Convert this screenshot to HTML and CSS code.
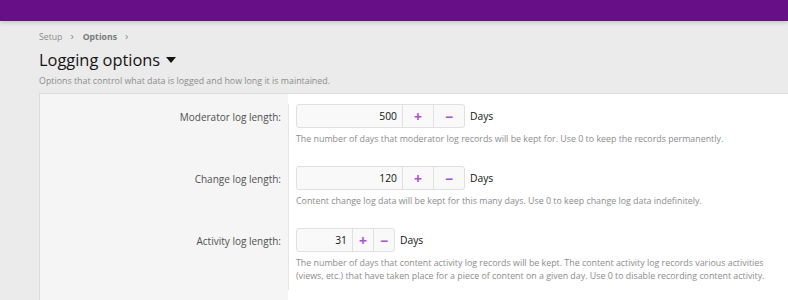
FILE: index.html
```html
<!DOCTYPE html>
<html lang="en">
<head>
    <meta charset="UTF-8">
    <title>Logging options</title>
    <link rel="stylesheet" href="styles.css">
</head>
<body>

    <header class="top-bar"></header>

    <div class="page">
        <ul class="crumbs">
            <li><a href="#">Setup</a></li>
            <li><a href="#" class="current">Options</a></li>
        </ul>

        <h1 class="page-title">Logging options <span class="caret"></span></h1>
        <p class="page-desc">Options that control what data is logged and how long it is maintained.</p>

        <div class="block">
            <div class="form-row">
                <label class="row-label">Moderator log length:</label>
                <div class="row-input">
                    <div class="input-line">
                        <div class="spinner">
                            <input type="text" class="num" value="500">
                            <button class="step">+</button>
                            <button class="step">&minus;</button>
                        </div>
                        <span class="unit">Days</span>
                    </div>
                    <p class="explain">The number of days that moderator log records will be kept for. Use 0 to keep the records permanently.</p>
                </div>
            </div>

            <div class="form-row">
                <label class="row-label">Change log length:</label>
                <div class="row-input">
                    <div class="input-line">
                        <div class="spinner">
                            <input type="text" class="num" value="120">
                            <button class="step">+</button>
                            <button class="step">&minus;</button>
                        </div>
                        <span class="unit">Days</span>
                    </div>
                    <p class="explain">Content change log data will be kept for this many days. Use 0 to keep change log data indefinitely.</p>
                </div>
            </div>

            <div class="form-row">
                <label class="row-label">Activity log length:</label>
                <div class="row-input">
                    <div class="input-line">
                        <div class="spinner small">
                            <input type="text" class="num" value="31">
                            <button class="step">+</button>
                            <button class="step">&minus;</button>
                        </div>
                        <span class="unit">Days</span>
                    </div>
                    <p class="explain">The number of days that content activity log records will be kept. The content activity log records various activities (views, etc.) that have taken place for a piece of content on a given day. Use 0 to disable recording content activity.</p>
                </div>
            </div>
        </div>
    </div>

</body>
</html>
```

FILE: styles.css
```css
body {
    font-family: "Open Sans", Arial, sans-serif;
    background-color: #ebebeb;
    color: #141414;
    margin: 0;
    padding: 0;
}
.top-bar {
    height: 21px;
    background-color: #670f86;
    box-shadow: 0 2px 4px rgba(0, 0, 0, 0.15);
}
.page {
    padding: 0 0 0 39px;
}
.crumbs {
    list-style-type: none;
    margin: 0;
    padding: 8px 0 0 0;
    display: flex;
    font-size: 8.7px;
    line-height: 14px;
}
.crumbs li::after {
    content: "\203A";
    color: #8c8c8c;
    margin: 0 9px 0 8px;
    font-size: 11px;
}
.crumbs a {
    color: #8c8c8c;
    text-decoration: none;
}
.crumbs a.current {
    font-weight: bold;
    color: #7a7a7a;
}
.page-title {
    font-weight: normal;
    font-size: 16.4px;
    line-height: 22px;
    margin: 5px 0 0 0;
    color: #141414;
    display: flex;
    align-items: center;
}
.caret {
    display: inline-block;
    margin-left: 6px;
    width: 0;
    height: 0;
    border-left: 5px solid transparent;
    border-right: 5px solid transparent;
    border-top: 6px solid #141414;
}
.page-desc {
    margin: 4px 0 0 0;
    font-size: 8.85px;
    line-height: 13px;
    color: #8c8c8c;
}
.block {
    margin-top: 5px;
    border-top: 1px solid #dcdcdc;
    border-left: 1px solid #dcdcdc;
    background: linear-gradient(to right, #f5f5f5 248px, #ffffff 248px);
    padding: 10px 0 30px 0;
}
.form-row {
    display: grid;
    grid-template-columns: 248px 1fr;
    height: 62px;
}
.row-label {
    text-align: right;
    padding: 6px 7px 0 0;
    font-size: 10px;
    line-height: 14px;
    color: #505050;
}
.row-input {
    padding-left: 7px;
    border-left: 1px solid #e6e6e6;
}
.input-line {
    display: flex;
    align-items: center;
    height: 24px;
}
.spinner {
    display: flex;
    height: 24px;
    border: 1px solid #e0e0e0;
    border-radius: 3px;
    background-color: #f9f9f9;
    box-sizing: border-box;
}
.num {
    width: 105px;
    border: none;
    background: transparent;
    text-align: right;
    font-family: inherit;
    font-size: 10.3px;
    color: #141414;
    padding: 0 5px 0 0;
    box-sizing: border-box;
    outline: none;
}
.step {
    width: 31px;
    border: none;
    border-left: 1px solid #e0e0e0;
    background: transparent;
    color: #b04fd4;
    font-family: inherit;
    font-size: 14px;
    font-weight: bold;
    padding: 0;
    cursor: pointer;
}
.spinner.small .num {
    width: 55px;
}
.spinner.small .step {
    width: 21px;
}
.unit {
    margin-left: 5px;
    font-size: 10.3px;
    color: #141414;
}
.explain {
    margin: 5px 0 0 0;
    font-size: 8.85px;
    line-height: 13px;
    color: #8c8c8c;
    max-width: 472px;
}
```
